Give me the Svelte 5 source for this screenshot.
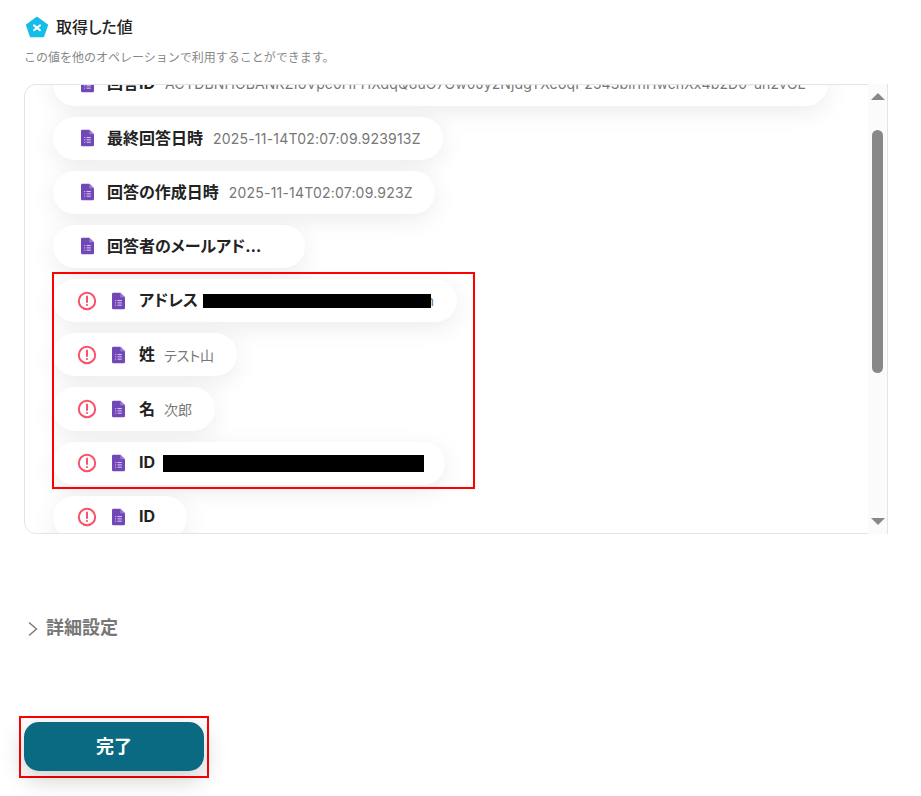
<script lang="ts">
  const rows = [
    { label: '回答ID', value: 'ACYDBNHOBANKZI6Vpc0HFHXdqQ8uO7Gw0Jy2NjdgTXe6qP2543bIrnHwchXx4b2D0-un2vGE', warn: false, spacing: 0.1 },
    { label: '最終回答日時', value: '2025-11-14T02:07:09.923913Z', warn: false },
    { label: '回答の作成日時', value: '2025-11-14T02:07:09.923Z', warn: false },
    { label: '回答者のメールアドレス', value: '', warn: false },
    { label: 'アドレス', value: '', warn: true, redact: 228, barH: 14, barGap: 5, tail: 'm' },
    { label: '姓', value: 'テスト山', warn: true },
    { label: '名', value: '次郎', warn: true },
    { label: 'ID', value: '', warn: true, redact: 261, barH: 17, barGap: 8 },
    { label: 'ID', value: '', warn: true },
  ]
</script>

<div class="page">
  <div class="head">
    <svg class="logo" viewBox="0 0 24 24" width="24" height="24">
      <path d="M12 1.5 L22.6 9.2 Q23.2 9.7 23 10.4 L19.2 21.4 Q19 22.2 18 22.2 L6 22.2 Q5 22.2 4.8 21.4 L1 10.4 Q.8 9.7 1.4 9.2 Z" fill="#14bde8" />
      <path d="M9 10.4 L15 15.2 M15 10.4 L9 15.2" stroke="#fff" stroke-width="2" stroke-linecap="round" />
    </svg>
    <h2>取得した値</h2>
  </div>
  <p class="sub">この値を他のオペレーションで利用することができます。</p>

  <div class="box">
    <div class="list">
      {#each rows as row}
        <div class="pill" class:warn={row.warn}>
          {#if row.warn}
            <svg class="alert" viewBox="0 0 20 20" width="20" height="20">
              <circle cx="10" cy="10" r="8.2" fill="none" stroke="#f8526a" stroke-width="2" />
              <path d="M10 5.4 V11" stroke="#f8526a" stroke-width="2" stroke-linecap="round" />
              <circle cx="10" cy="14" r="1.1" fill="#f8526a" />
            </svg>
          {/if}
          <svg class="form" viewBox="0 0 14 18" width="13" height="18">
            <path d="M1.4 0 H9 L14 5 V16.6 Q14 18 12.6 18 H1.4 Q0 18 0 16.6 V1.4 Q0 0 1.4 0 Z" fill="#7248b9" />
            <path d="M9 0 L14 5 H9 Z" fill="#9a7bd0" />
            <path d="M3.5 8.5 H4.5 M6 8.5 H10.5 M3.5 11 H4.5 M6 11 H10.5 M3.5 13.5 H4.5 M6 13.5 H10.5" stroke="#e4daf4" stroke-width="1" />
          </svg>
          <span class="label">{row.label}</span>
          {#if row.redact}
            <span class="value redacted" style="margin-left: {row.barGap}px">
              <span class="bar" style="width: {row.redact}px; height: {row.barH}px"></span>{#if row.tail}<span class="tail">{row.tail}</span>{/if}
            </span>
          {:else if row.spacing}
            <span class="value" style="letter-spacing: {row.spacing}px">{row.value}</span>
          {:else}
            <span class="value">{row.value}</span>
          {/if}
        </div>
      {/each}
    </div>
    <div class="scroll">
      <span class="arrow up"></span>
      <span class="track"><span class="thumb"></span></span>
      <span class="arrow down"></span>
    </div>
  </div>

  <div class="more">
    <svg viewBox="0 0 12 16" width="12" height="16">
      <path d="M2 1.5 L9.5 8 L2 14.5" fill="none" stroke="#777" stroke-width="1.4" />
    </svg>
    <span>詳細設定</span>
  </div>

  <div class="done-wrap">
    <button class="done">完了</button>
  </div>

  <div class="mark"></div>
</div>

<style>
  :global(body) {
    background: #fff;
    font-family: Inter, "Noto Sans CJK JP", sans-serif;
    color: #222;
  }
  .page {
    position: relative;
    width: 921px;
    height: 796px;
    overflow: hidden;
    box-sizing: border-box;
    padding: 15px 33px 0 24px;
  }
  .head {
    display: flex;
    align-items: center;
    gap: 7px;
    height: 24px;
    padding-left: 1px;
  }
  h2 {
    margin: 0;
    font-size: 16px;
    font-weight: 500;
    line-height: 24px;
    font-feature-settings: "palt";
  }
  .sub {
    margin: 9px 0 0;
    font-size: 12px;
    line-height: 20px;
    color: #888;
  }
  .box {
    display: flex;
    height: 450px;
    margin-top: 16px;
    box-sizing: border-box;
    border: 1px solid #e4e4e4;
    border-radius: 12px;
  }
  .list {
    flex: 1;
    min-width: 0;
    overflow: hidden;
    border-radius: 11px 0 0 11px;
    padding-left: 28px;
  }
  .pill {
    display: flex;
    align-items: center;
    width: fit-content;
    height: 43.2px;
    margin-bottom: 11px;
    box-sizing: border-box;
    padding: 0 22px 0 28px;
    background: #fff;
    border-radius: 22px;
    box-shadow: 0 6px 24px rgba(0, 0, 0, 0.08);
    white-space: nowrap;
    font-feature-settings: "palt";
  }
  .pill:first-child {
    margin-top: -22.7px;
  }
  .pill.warn {
    padding: 0 23px 0 24px;
  }
  .alert {
    flex: none;
    margin-right: 15px;
  }
  .form {
    flex: none;
    margin-right: 13px;
  }
  .warn .form {
    margin-right: 14px;
  }
  .label {
    max-width: 166px;
    overflow: hidden;
    text-overflow: ellipsis;
    margin-bottom: 3px;
    font-size: 16px;
    font-weight: 700;
    color: #222;
  }
  .value {
    margin-left: 10px;
    font-size: 14px;
    letter-spacing: 0.2px;
    color: #777;
  }
  .warn .value {
    margin-left: 9px;
    letter-spacing: 0;
  }
  .redacted {
    display: flex;
    align-items: center;
    margin-right: -2px;
  }
  .tail {
    width: 3px;
    margin-right: 2px;
    overflow: hidden;
    direction: rtl;
  }
  .bar {
    background: #000;
  }
  .scroll {
    flex: none;
    width: 19px;
    margin: -1px -1px -1px 0;
    border-right: 1px solid #e4e4e4;
    display: flex;
    flex-direction: column;
    align-items: center;
    background: #fbfbfb;
  }
  .arrow {
    flex: none;
    width: 0;
    height: 0;
    border-left: 7px solid transparent;
    border-right: 7px solid transparent;
  }
  .arrow.up {
    margin-top: 9px;
    border-bottom: 7px solid #888;
  }
  .arrow.down {
    margin-bottom: 9px;
    border-top: 7px solid #888;
  }
  .track {
    flex: 1;
    padding-top: 30px;
  }
  .thumb {
    display: block;
    width: 11px;
    height: 243px;
    background: #888;
    border-radius: 6px;
  }
  .more {
    display: flex;
    align-items: center;
    gap: 7px;
    margin-top: 79px;
    padding-left: 3px;
    height: 26px;
    font-size: 18px;
    font-weight: 700;
    color: #777;
  }
  .more svg {
    margin-top: 5px;
  }
  .done-wrap {
    width: 190px;
    height: 62px;
    box-sizing: border-box;
    margin: 77px 0 0 -5px;
    padding: 4px 3px;
    border: 2px solid #f00;
  }
  .done {
    display: block;
    width: 180px;
    height: 49px;
    padding: 0 0 3px;
    border: 0;
    border-radius: 15px;
    background: #0a6a82;
    color: #fff;
    font: 700 18px Inter, "Noto Sans CJK JP", sans-serif;
    box-shadow: 0 8px 24px rgba(0, 0, 0, 0.2);
  }
  .mark {
    position: absolute;
    left: 52px;
    top: 272px;
    width: 423px;
    height: 217px;
    box-sizing: border-box;
    border: 2px solid #f00;
    pointer-events: none;
  }
</style>
